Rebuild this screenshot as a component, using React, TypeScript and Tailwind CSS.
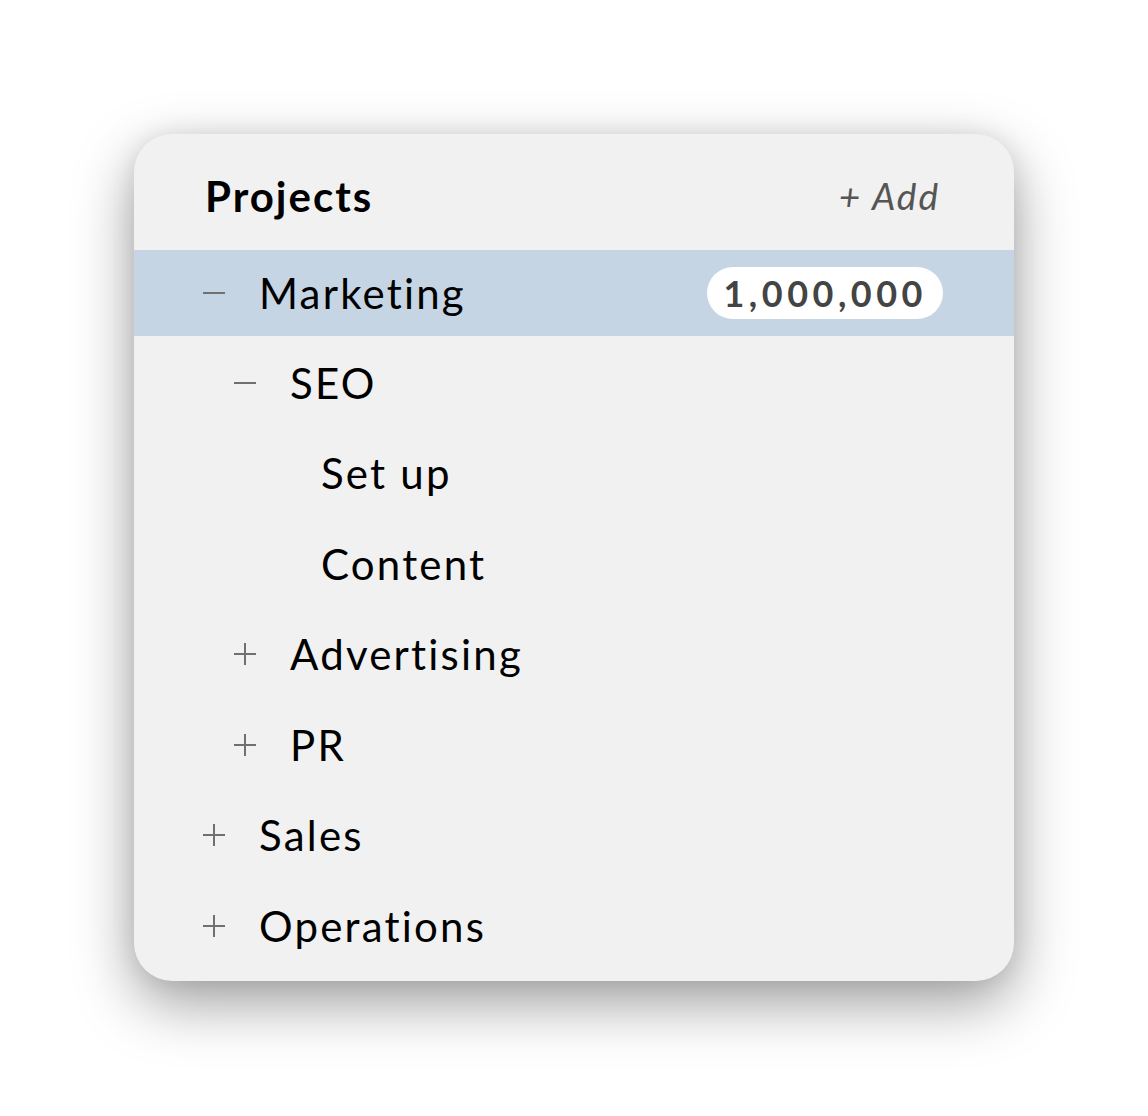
import React from "react";

type Row = { label: string; level: number; icon: "minus" | "plus" | null; selected?: boolean; badge?: string };

const rows: Row[] = [
  { label: "Marketing", level: 0, icon: "minus", selected: true, badge: "1,000,000" },
  { label: "SEO", level: 1, icon: "minus" },
  { label: "Set up", level: 2, icon: null },
  { label: "Content", level: 2, icon: null },
  { label: "Advertising", level: 1, icon: "plus" },
  { label: "PR", level: 1, icon: "plus" },
  { label: "Sales", level: 0, icon: "plus" },
  { label: "Operations", level: 0, icon: "plus" },
];

function Icon({ kind }: { kind: "minus" | "plus" | null }) {
  if (!kind) return <span className="w-[22px] h-[22px] shrink-0" />;
  return (
    <svg width="22" height="22" viewBox="0 0 22 22" className="shrink-0">
      <line x1="0" y1="11" x2="22" y2="11" stroke="#707070" strokeWidth="2" />
      {kind === "plus" && <line x1="11" y1="0" x2="11" y2="22" stroke="#707070" strokeWidth="2" />}
    </svg>
  );
}

const pad: Record<number, string> = { 0: "pl-[69px]", 1: "pl-[100px]", 2: "pl-[131px]" };

export default function App() {
  return (
    <div className="min-h-[1116px] w-[1148px] bg-white pt-[134px] pl-[134px]" style={{ fontFamily: "Lato, 'Open Sans', sans-serif" }}>
      <div className="w-[880px] h-[847px] bg-[#f1f1f1] rounded-[38px] shadow-[0_22px_60px_rgba(0,0,0,0.38),0_0_24px_rgba(0,0,0,0.08)] overflow-hidden flex flex-col">
        <div className="h-[116px] shrink-0 flex items-center justify-between pl-[71px] pr-[74px] pt-[8px]">
          <span className="text-[42px] font-bold text-black tracking-[2px]">Projects</span>
          <span className="text-[37px] italic text-[#555] tracking-[2px]">+ Add</span>
        </div>
        {rows.map((r, i) => (
          <div
            key={i}
            className={`${r.selected ? "h-[86px] bg-[#c5d5e4]" : "h-[90.5px] pt-[3px]"} shrink-0 flex items-center ${pad[r.level]} pr-[71px]`}
          >
            <Icon kind={r.icon} />
            <span className="ml-[34px] text-[42px] text-black leading-none flex-1 tracking-[2.2px]">{r.label}</span>
            {r.badge && (
              <span className="bg-white rounded-full h-[52px] px-[16px] flex items-center text-[36px] font-bold text-[#444] tracking-[4.5px]">
                {r.badge}
              </span>
            )}
          </div>
        ))}
      </div>
    </div>
  );
}
